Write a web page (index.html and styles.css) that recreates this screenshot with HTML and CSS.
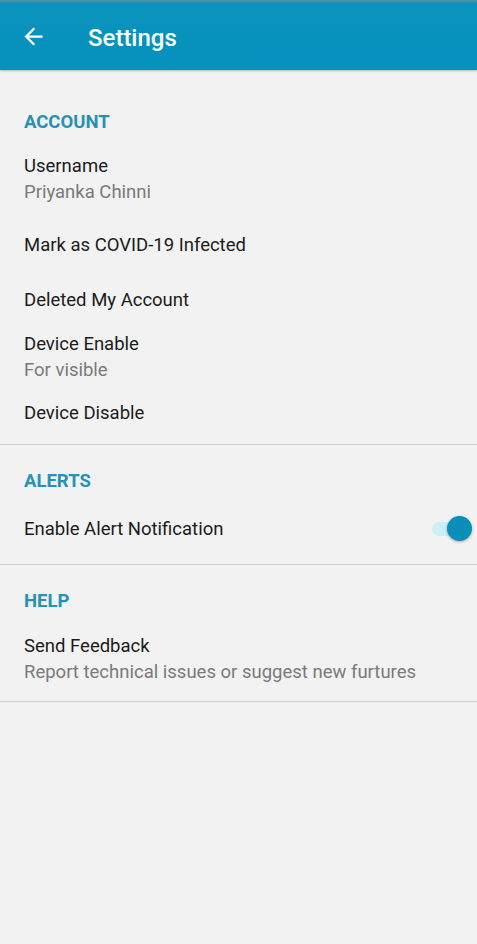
FILE: index.html
```html
<!DOCTYPE html>
<html>
<head>
<meta charset="utf-8">
<link rel="stylesheet" href="styles.css">
</head>
<body>
<header class="appbar">
  <svg class="back" viewBox="0 0 24 24" width="27" height="27"><path d="M20 11H7.83l5.59-5.59L12 4l-8 8 8 8 1.41-1.41L7.83 13H20v-2z" fill="#fff"/></svg>
  <h1 class="title">Settings</h1>
</header>
<main class="content">
  <section class="group">
    <h2 class="group-title first">ACCOUNT</h2>
    <div class="item h79"><div class="label">Username</div><div class="sub">Priyanka Chinni</div></div>
    <div class="item h55"><div class="label">Mark as COVID-19 Infected</div></div>
    <div class="item h44"><div class="label">Deleted My Account</div></div>
    <div class="item h69"><div class="label">Device Enable</div><div class="sub">For visible</div></div>
    <div class="item h47"><div class="label">Device Disable</div></div>
  </section>
  <section class="group">
    <h2 class="group-title alerts">ALERTS</h2>
    <div class="item row h50"><div class="label">Enable Alert Notification</div><span class="switch"><span class="track"></span><span class="thumb"></span></span></div>
  </section>
  <section class="group">
    <h2 class="group-title help">HELP</h2>
    <div class="item h71"><div class="label">Send Feedback</div><div class="sub">Report technical issues or suggest new furtures</div></div>
  </section>
</main>
</body>
</html>
```
FILE: styles.css
```css
* { box-sizing: border-box; }
html, body { margin: 0; padding: 0; }
body {
  background: #f2f2f2;
  font-family: Roboto, "Noto Sans", sans-serif;
  width: 477px;
  height: 944px;
  overflow: hidden;
}
.appbar {
  height: 70px;
  background: linear-gradient(#6a8f9c 0, #0a93bd 3px, #0592be 100%);
  display: flex;
  align-items: center;
  padding: 0 0 0 20px;
  box-shadow: 0 1px 2px rgba(0,0,0,0.25);
  position: relative;
}
.back { width: 27px; height: 27px; margin-top: 2px; flex: none; }
.title {
  margin: 0 0 0 41px;
  color: #fff;
  font-size: 24px;
  font-weight: 500;
  padding-top: 5px;
}
.group { border-bottom: 1px solid #cfcfcf; }
.group-title {
  margin: 0;
  padding: 26px 24px 0;
  font-size: 18.5px;
  font-weight: 700;
  color: #2791b3;
  line-height: 20px;
}
.group-title.first { padding-top: 42px; height: 80px; }
.group-title.alerts { height: 69px; }
.group-title.help { height: 65px; }
.item { padding: 3px 24px 0; }
.label { font-size: 18.5px; color: #1b1b1b; line-height: 26px; }
.sub { font-size: 18.5px; color: #7a7a7a; line-height: 26px; }
.h79 { height: 79px; }
.h55 { height: 55px; }
.h44 { height: 44px; }
.h69 { height: 69px; }
.h47 { height: 47px; }
.h50 { height: 50px; }
.h71 { height: 71px; }
.item.row { display: flex; align-items: flex-start; justify-content: space-between; padding-right: 5px; padding-top: 2px; }
.switch { position: relative; width: 40px; height: 26px; }
.track { position: absolute; left: 0; top: 6px; width: 34px; height: 14px; border-radius: 7px; background: #cdeff7; }
.thumb { position: absolute; right: 0; top: 0; width: 25px; height: 25px; border-radius: 50%; background: #0a8fbb; box-shadow: 0 1px 3px rgba(0,0,0,0.3); }
```
